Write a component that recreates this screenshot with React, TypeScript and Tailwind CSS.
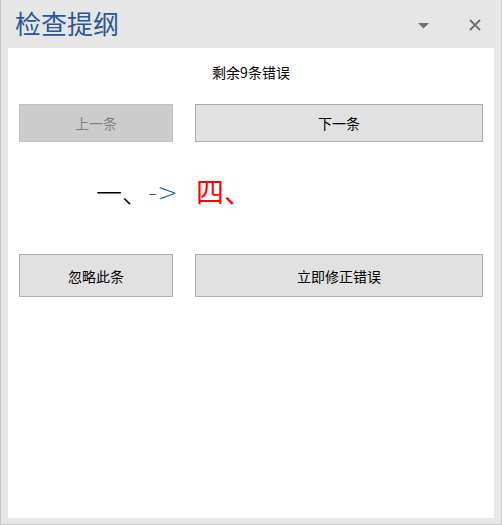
import React from 'react';

const cjk = { fontFamily: '"Microsoft YaHei", "Noto Sans CJK SC", "Noto Sans", sans-serif' };

function PaneButton({ label, wide, disabled, tall }: { label: string; wide?: boolean; disabled?: boolean; tall?: boolean }) {
    return (
        <button
            className={
                (wide ? 'flex-1 ' : 'w-[154px] ') +
                (tall ? 'h-[43px] ' : 'h-[38px] ') +
                (disabled
                    ? 'bg-[#cccccc] border border-[#bfbfbf] text-[#838383] '
                    : 'bg-[#e1e1e1] border border-[#adadad] text-black ') +
                'text-[14px] leading-none flex items-center justify-center'
            }
            style={cjk}
        >
            {label}
        </button>
    );
}

export default function App() {
    return (
        <div className="w-[502px] h-[525px] bg-[#e6e6e6] border-x border-b border-[#c6c6c6] flex flex-col" style={cjk}>
            <div className="h-[48px] flex items-center pl-[14px] pr-[20px] shrink-0">
                <h1 className="text-[26px] leading-none text-[#2b5797] -mt-[2px]">检查提纲</h1>
                <div className="ml-auto flex items-center">
                    <svg width="11" height="6" viewBox="0 0 11 6" className="mt-[3px]">
                        <path d="M0 0 H11 L5.5 5.5 Z" fill="#6f6f6f" />
                    </svg>
                    <svg width="12" height="12" viewBox="0 0 12 12" className="ml-[40px] mt-[1px]">
                        <path d="M1 1 L11 11 M11 1 L1 11" stroke="#6f6f6f" strokeWidth="1.8" />
                    </svg>
                </div>
            </div>
            <div className="flex-1 bg-white mx-[7px] mb-[6px] px-[11px] flex flex-col">
                <p className="pt-[16px] text-[14px] leading-[16px] text-center text-black">剩余9条错误</p>
                <div className="mt-[24px] flex gap-[22px]">
                    <PaneButton label="上一条" disabled />
                    <PaneButton label="下一条" wide />
                </div>
                <div className="h-[112px] pt-[37px] pl-[77px] flex items-start leading-none">
                    <span className="text-[26px] text-black font-light">一、</span>
                    <span className="text-[25px] text-[#1f5cad] font-extralight mt-[1px]" style={{ fontFamily: '"DejaVu Sans", sans-serif' }}>-&gt;</span>
                    <span className="text-[28px] text-[#ff0000] ml-[18px] -mt-[2px]">四、</span>
                </div>
                <div className="flex gap-[22px]">
                    <PaneButton label="忽略此条" tall />
                    <PaneButton label="立即修正错误" wide tall />
                </div>
            </div>
        </div>
    );
}
